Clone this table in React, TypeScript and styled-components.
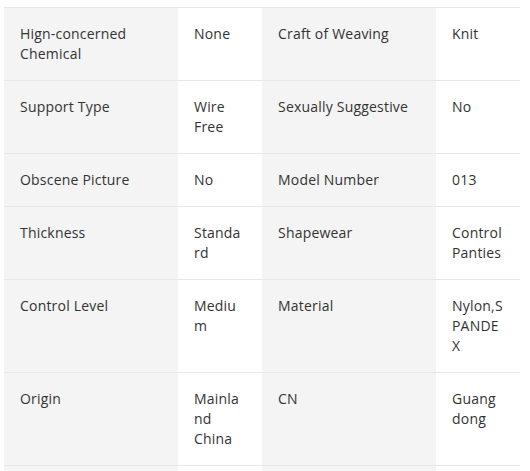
import React from "react";
import styled, { createGlobalStyle } from "styled-components";

const Global = createGlobalStyle`
  html, body { margin: 0; padding: 0; background: #fff; }
  body { font-family: "Open Sans", "Noto Sans", sans-serif; }
`;

const Page = styled.div`
  padding: 7px 10px 0 4px;
`;

const Table = styled.div`
  width: 516px;
  display: flex;
  flex-direction: column;
`;

const Row = styled.div<{ $single?: boolean }>`
  display: grid;
  grid-template-columns: 174px 84px 174px 84px;
  grid-auto-rows: minmax(${(p) => (p.$single ? "52px" : "72px")}, auto);
  border-top: 1px solid #e8e8e8;
`;

const Cell = styled.div<{ $label?: boolean }>`
  box-sizing: border-box;
  padding: 16px;
  font-size: 14px;
  line-height: 20px;
  letter-spacing: 0.2px;
  color: #333;
  background: ${(p) => (p.$label ? "#f4f4f4" : "#fff")};
  overflow-wrap: anywhere;
  word-break: break-word;
`;

const rows: [string, string, string, string][] = [
  ["Hign-concerned Chemical", "None", "Craft of Weaving", "Knit"],
  ["Support Type", "Wire Free", "Sexually Suggestive", "No"],
  ["Obscene Picture", "No", "Model Number", "013"],
  ["Thickness", "Standard", "Shapewear", "Control Panties"],
  ["Control Level", "Medium", "Material", "Nylon,SPANDEX"],
  ["Origin", "Mainland China", "CN", "Guangdong"],
  ["", "", "", ""],
];

export default function App() {
  return (
    <>
      <Global />
      <Page>
        <Table>
          {rows.map((r, i) => (
            <Row key={i} $single={i === 2}>
              <Cell $label>{r[0]}</Cell>
              <Cell>{r[1]}</Cell>
              <Cell $label>{r[2]}</Cell>
              <Cell>{r[3]}</Cell>
            </Row>
          ))}
        </Table>
      </Page>
    </>
  );
}
